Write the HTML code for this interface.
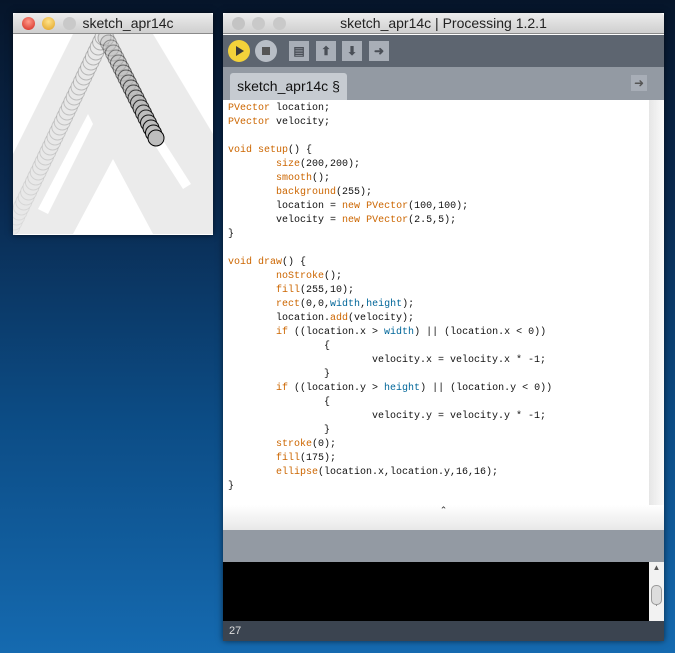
<!DOCTYPE html>
<html><head><meta charset="utf-8"><style>
*{margin:0;padding:0;box-sizing:border-box}
body{width:675px;height:653px;overflow:hidden;position:relative;background:linear-gradient(#06152a 0px,#0a2a50 200px,#0c4c85 420px,#156ab0 653px);font-family:"Liberation Sans",sans-serif}
.abs{position:absolute}
.title{background:linear-gradient(#ececec,#cfcfcf);border-bottom:1px solid #8a8a8a;height:21px;border-radius:4px 4px 0 0;font-size:14px;color:#222;text-align:center;line-height:21px}
.dot{position:absolute;top:4px;width:13px;height:13px;border-radius:50%}
pre{font-family:"Liberation Mono",monospace;font-size:10px;line-height:14px;color:#111}
.o{color:#cc6600}.b{color:#006699}
.tb{position:absolute;top:28px;width:20px;height:20px;background:#a8aeb7;color:#4a4f57;font-size:12px;line-height:20px;text-align:center;font-weight:bold}
</style></head><body>
<!-- sketch window -->
<div class="abs" style="left:13px;top:13px;width:200px;height:222px;background:#fff;box-shadow:0 0 6px rgba(0,0,0,.6)">
 <div class="title" style="padding-left:30px">sketch_apr14c</div>
 <div class="dot" style="left:9px;background:radial-gradient(circle at 50% 35%,#ff9a8a,#d2261c)"></div>
 <div class="dot" style="left:29px;background:radial-gradient(circle at 50% 35%,#ffe38a,#e0a020)"></div>
 <div class="dot" style="left:50px;background:#c9c9c9"></div>
 <svg class="abs" style="left:0;top:21px" width="200" height="201" id="cv">
  <polygon fill="#ebebeb" points="0,200 0,120 60,0 140,0 200,100 200,200 140,200 100,125 60,200"/>
  <polygon fill="#fff" points="25,175 75,80 80,90 35,180"/>
  <polygon fill="#fff" points="130,75 178,150 170,155 125,85"/>
 </svg>
</div>
<!-- processing window -->
<div class="abs" style="left:223px;top:13px;width:441px;height:628px;background:#fff;box-shadow:0 0 6px rgba(0,0,0,.6)">
 <div class="title">sketch_apr14c | Processing 1.2.1</div>
 <div class="dot" style="left:9px;background:#c4c4c4"></div>
 <div class="dot" style="left:29px;background:#c9c9c9"></div>
 <div class="dot" style="left:50px;background:#c9c9c9"></div>
 <div class="abs" style="left:0;top:22px;width:441px;height:32px;background:#5d6570"></div>
 <div class="abs" style="left:5px;top:27px;width:22px;height:22px;border-radius:50%;background:#f3d23a"></div>
 <div class="abs" style="left:13px;top:33px;width:0;height:0;border-left:8px solid #3a3a3a;border-top:5px solid transparent;border-bottom:5px solid transparent"></div>
 <div class="abs" style="left:32px;top:27px;width:22px;height:22px;border-radius:50%;background:#b8bec6"></div>
 <div class="abs" style="left:39px;top:34px;width:8px;height:8px;background:#555"></div>
 <div class="tb" style="left:66px">▤</div>
 <div class="tb" style="left:93px">⬆</div>
 <div class="tb" style="left:119px">⬇</div>
 <div class="tb" style="left:146px">➜</div>
 <div class="abs" style="left:0;top:54px;width:441px;height:33px;background:#939aa3"></div>
 <div class="abs" style="left:7px;top:60px;width:117px;height:27px;background:#c6cbd1;border-radius:3px 3px 0 0;font-size:14px;line-height:27px;text-align:center;color:#111">sketch_apr14c §</div>
 <div class="abs" style="left:408px;top:62px;width:16px;height:16px;background:#a8aeb7;color:#555;font-size:12px;line-height:16px;text-align:center">➜</div>
 <pre class="abs" style="left:5px;top:89px"><span class="o">PVector</span> location;
<span class="o">PVector</span> velocity;

<span class="o">void</span> <span class="o">setup</span>() {
        <span class="o">size</span>(200,200);
        <span class="o">smooth</span>();
        <span class="o">background</span>(255);
        location = <span class="o">new</span> <span class="o">PVector</span>(100,100);
        velocity = <span class="o">new</span> <span class="o">PVector</span>(2.5,5);
}

<span class="o">void</span> <span class="o">draw</span>() {
        <span class="o">noStroke</span>();
        <span class="o">fill</span>(255,10);
        <span class="o">rect</span>(0,0,<span class="b">width</span>,<span class="b">height</span>);
        location.<span class="o">add</span>(velocity);
        <span class="o">if</span> ((location.x &gt; <span class="b">width</span>) || (location.x &lt; 0))
                {
                        velocity.x = velocity.x * -1;
                }
        <span class="o">if</span> ((location.y &gt; <span class="b">height</span>) || (location.y &lt; 0))
                {
                        velocity.y = velocity.y * -1;
                }
        <span class="o">stroke</span>(0);
        <span class="o">fill</span>(175);
        <span class="o">ellipse</span>(location.x,location.y,16,16);
}</pre>
 <div class="abs" style="left:426px;top:87px;width:15px;height:405px;background:linear-gradient(90deg,#e6e6e6,#fafafa)"></div>
 <div class="abs" style="left:0;top:492px;width:441px;height:25px;background:linear-gradient(#fff,#e8e8e8);font-size:9px;text-align:center;color:#333">⌃</div>
 <div class="abs" style="left:0;top:517px;width:441px;height:32px;background:#939aa3"></div>
 <div class="abs" style="left:0;top:549px;width:426px;height:59px;background:#000"></div>
 <div class="abs" style="left:426px;top:549px;width:15px;height:59px;background:#f2f2f2;font-size:8px;color:#555;text-align:center;line-height:12px">▲<br><br><br>▼</div>
 <div class="abs" style="left:428px;top:572px;width:11px;height:20px;border:1px solid #999;border-radius:5px;background:#ddd"></div>
 <div class="abs" style="left:0;top:608px;width:441px;height:20px;background:#3b4450;color:#ddd;font-size:11px;line-height:20px;padding-left:6px">27</div>
</div>
<script>
var s=document.getElementById('cv'),h='';
for(var i=38;i>=0;i--){var x=90-2.4*i,y=5*i+3;if(y>200)continue;h+='<circle cx="'+x+'" cy="'+y+'" r="8" fill="#e8e8e8" stroke="#000" stroke-opacity="'+(0.04+0.2*(1-i/38))+'"/>';}
for(var i=0;i<=20;i++){var x=93+2.5*i,y=4+5*i;var a=0.25+0.75*i/20;h+='<circle cx="'+x+'" cy="'+y+'" r="8" fill="#bdbdbd" fill-opacity="'+a+'" stroke="#000" stroke-opacity="'+a+'"/>';}
s.innerHTML+=h;
</script>
</body></html>
